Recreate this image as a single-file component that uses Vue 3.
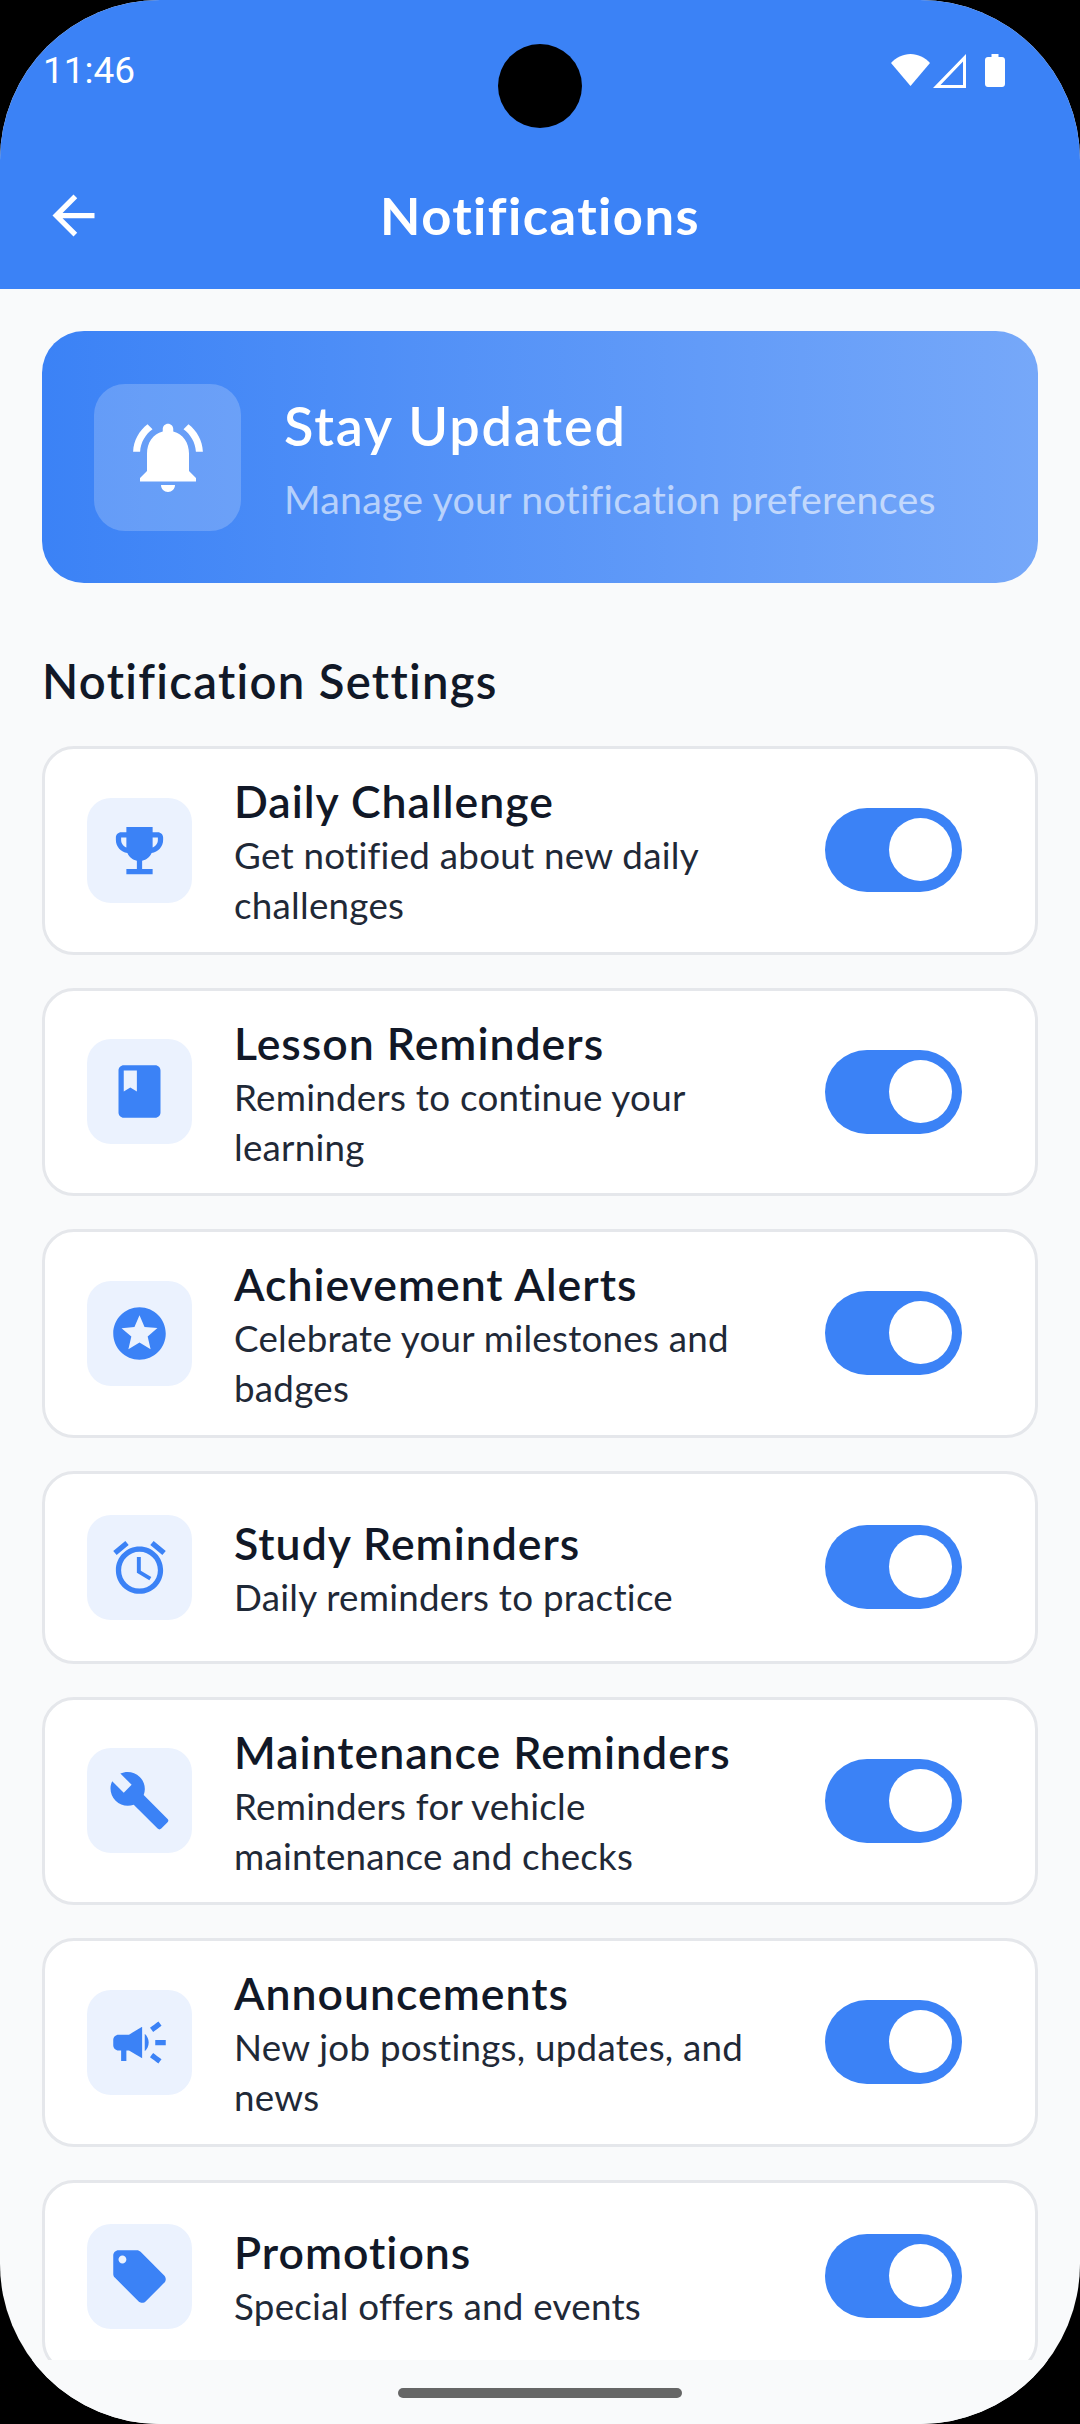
<script setup>
const items = [
  { t: 'Daily Challenge', s: 'Get notified about new daily challenges', i: 'trophy' },
  { t: 'Lesson Reminders', s: 'Reminders to continue your learning', i: 'book' },
  { t: 'Achievement Alerts', s: 'Celebrate your milestones and badges', i: 'star' },
  { t: 'Study Reminders', s: 'Daily reminders to practice', i: 'alarm' },
  { t: 'Maintenance Reminders', s: 'Reminders for vehicle maintenance and checks', i: 'wrench' },
  { t: 'Announcements', s: 'New job postings, updates, and news', i: 'campaign' },
  { t: 'Promotions', s: 'Special offers and events', i: 'tag' },
]
const paths = {
  trophy: 'M19 5h-2V3H7v2H5c-1.1 0-2 .9-2 2v1c0 2.55 1.92 4.63 4.39 4.94.63 1.5 1.98 2.63 3.61 2.96V19H7v2h10v-2h-4v-3.1c1.63-.33 2.98-1.46 3.61-2.96C19.08 12.63 21 10.55 21 8V7c0-1.1-.9-2-2-2zM5 8V7h2v3.82C5.84 10.4 5 9.3 5 8zm14 0c0 1.3-.84 2.4-2 2.82V7h2v1z',
  book: 'M18 2H6c-1.1 0-2 .9-2 2v16c0 1.1.9 2 2 2h12c1.1 0 2-.9 2-2V4c0-1.1-.9-2-2-2zM6 4h5v8l-2.5-1.5L6 12V4z',
  star: 'M11.99 2C6.47 2 2 6.48 2 12s4.47 10 9.99 10C17.52 22 22 17.52 22 12S17.52 2 11.99 2zm4.24 16L12 15.45 7.77 18l1.12-4.81-3.73-3.23 4.92-.42L12 5l1.92 4.53 4.92.42-3.73 3.23L16.23 18z',
  alarm: 'M22 5.72l-4.6-3.86-1.29 1.53 4.6 3.86L22 5.72zM7.88 3.39L6.6 1.86 2 5.71l1.29 1.53 4.59-3.85zM12.5 8H11v6l4.75 2.85.75-1.23-4-2.37V8zM12 4c-4.97 0-9 4.03-9 9s4.03 9 9 9 9-4.03 9-9-4.03-9-9-9zm0 16c-3.87 0-7-3.13-7-7s3.13-7 7-7 7 3.13 7 7-3.13 7-7 7z',
  wrench: 'M22.7 19l-9.1-9.1c.9-2.3.4-5-1.5-6.9-2-2-5-2.4-7.4-1.3L9 6 6 9 1.6 4.7C.4 7.1.9 10.1 2.9 12.1c1.9 1.9 4.6 2.4 6.9 1.5l9.1 9.1c.4.4 1 .4 1.4 0l2.3-2.3c.5-.4.5-1.1.1-1.4z',
  campaign: 'M18 11v2h4v-2h-4zm-2 6.61c.96.71 2.21 1.65 3.2 2.39.4-.53.8-1.07 1.2-1.6-.99-.74-2.24-1.68-3.2-2.4-.4.54-.8 1.08-1.2 1.61zM20.4 5.6c-.4-.53-.8-1.07-1.2-1.6-.99.74-2.24 1.68-3.2 2.4.4.53.8 1.07 1.2 1.6.96-.72 2.21-1.65 3.2-2.4zM4 9c-1.1 0-2 .9-2 2v2c0 1.1.9 2 2 2h1v4h2v-4h1l5 3V6L8 9H4zm11.5 3c0-1.33-.58-2.53-1.5-3.35v6.69c.92-.81 1.5-2.01 1.5-3.34z',
  tag: 'M21.41 11.58l-9-9C12.05 2.22 11.55 2 11 2H4c-1.1 0-2 .9-2 2v7c0 .55.22 1.05.59 1.42l9 9c.36.36.86.58 1.41.58.55 0 1.05-.22 1.41-.59l7-7c.37-.36.59-.86.59-1.41 0-.55-.23-1.06-.59-1.42zM5.5 7C4.67 7 4 6.33 4 5.5S4.67 4 5.5 4 7 4.67 7 5.5 6.33 7 5.5 7z',
}
</script>

<template>
  <div class="screen">
    <header class="header">
      <div class="status">
        <span class="time">11:46</span>
        <div class="status-icons">
          <svg class="wifi" viewBox="0 0 39 32"><path d="M19.500 32 0 9C5 3.500 12 0 19.500 0S34 3.500 39 9z" /></svg>
          <svg class="signal" viewBox="0 0 33 34"><path fill-rule="evenodd" d="M33 0v34H0zM30 7.500 7.500 31H30z" /></svg>
          <svg class="battery" viewBox="0 0 20 33"><path d="M6.500 0h7v3H17c1.700 0 3 1.300 3 3v24c0 1.700-1.300 3-3 3H3c-1.700 0-3-1.300-3-3V6c0-1.700 1.300-3 3-3h3.500z" /></svg>
        </div>
      </div>
      <div class="appbar">
        <svg class="back" viewBox="0 0 24 24"><path d="M20 11H7.830l5.590-5.590L12 4l-8 8 8 8 1.410-1.410L7.830 13H20z" /></svg>
        <h1 class="title">Notifications</h1>
      </div>
    </header>
    <div class="camera"></div>

    <main class="content">
      <section class="banner">
        <div class="banner-icon">
          <svg viewBox="0 0 24 24"><path d="M12 22c1.100 0 2-.9 2-2h-4c0 1.100.9 2 2 2zm6-6v-5c0-3.070-1.640-5.640-4.500-6.320V4c0-.83-.67-1.500-1.500-1.500s-1.500.67-1.500 1.500v.68C7.630 5.360 6 7.920 6 11v5l-2 2v1h16v-1l-2-2zM7.580 4.080 6.150 2.650C3.750 4.480 2.170 7.300 2.030 10.500h2C4.180 7.850 5.540 5.530 7.580 4.080zM19.970 10.500h2c-.15-3.200-1.730-6.020-4.120-7.850l-1.420 1.430c2.020 1.450 3.390 3.770 3.540 6.420z" /></svg>
        </div>
        <div class="banner-text">
          <div class="banner-title">Stay Updated</div>
          <div class="banner-sub">Manage your notification preferences</div>
        </div>
      </section>

      <h2 class="section">Notification Settings</h2>

      <div class="list">
        <article v-for="it in items" :key="it.t" class="card">
          <div class="card-icon">
            <svg viewBox="0 0 24 24"><path :d="paths[it.i]" /></svg>
          </div>
          <div class="card-text">
            <div class="card-title">{{ it.t }}</div>
            <div class="card-sub">{{ it.s }}</div>
          </div>
          <div class="toggle"><span class="thumb"></span></div>
        </article>
      </div>
    </main>

    <footer class="navbar"><span class="home"></span></footer>
  </div>
</template>

<style>
html, body { margin: 0; background: #000; }
</style>

<style scoped>
.screen {
  position: relative;
  width: 1080px;
  height: 2424px;
  overflow: hidden;
  border-radius: 160px;
  background: #F9FAFB;
  display: flex;
  flex-direction: column;
  font-family: "Lato", "Open Sans", sans-serif;
  color: #111827;
}
.header {
  flex: none;
  height: 289px;
  background: #3B82F6;
  color: #fff;
}
.status {
  height: 142px;
  padding: 0 75px 0 43px;
  display: flex;
  justify-content: space-between;
  align-items: flex-start;
}
.time {
  font-family: Roboto, sans-serif;
  font-size: 37px;
  line-height: 44px;
  margin-top: 49px;
}
.status-icons { display: flex; align-items: flex-start; margin-top: 54px; }
.status-icons svg { fill: #fff; display: block; }
.wifi { width: 39px; height: 32px; }
.signal { width: 33px; height: 34px; margin-left: 3px; }
.battery { width: 20px; height: 33px; margin-left: 19px; }
.appbar {
  position: relative;
  height: 147px;
  display: flex;
  align-items: center;
  justify-content: center;
  padding-bottom: 2px;
  box-sizing: border-box;
}
.back { position: absolute; left: 42px; top: 42px; width: 63px; height: 63px; fill: #fff; }
.title { margin: 0; font-size: 52.5px; font-weight: 700; line-height: 60px; letter-spacing: 1.4px; }
.camera {
  position: absolute;
  left: 498px;
  top: 44px;
  width: 84px;
  height: 84px;
  border-radius: 50%;
  background: #000;
}
.content {
  flex: none;
  height: 2071px;
  box-sizing: border-box;
  overflow: hidden;
  padding: 42px 42px 0;
}
.banner {
  height: 252px;
  box-sizing: border-box;
  border-radius: 42px;
  padding: 0 52px;
  display: flex;
  align-items: center;
  gap: 43px;
  background: linear-gradient(90deg, #3B82F6, #76A8F9);
}
.banner-icon {
  flex: none;
  width: 147px;
  height: 147px;
  border-radius: 31px;
  background: rgba(255, 255, 255, .2);
  display: flex;
  align-items: center;
  justify-content: center;
}
.banner-icon svg { width: 84px; height: 84px; fill: #fff; }
.banner-text { padding-top: 3px; }
.banner-title { color: #fff; font-size: 54px; font-weight: 600; line-height: 64px; letter-spacing: 1.9px; }
.banner-sub { color: rgba(255, 255, 255, .6); font-size: 39.4px; line-height: 48px; margin-top: 17px; letter-spacing: .2px; }
.section { margin: 68px 0 0; font-size: 47.25px; font-weight: 600; line-height: 60px; letter-spacing: 1.3px; color: #111827; }
.list { display: flex; flex-direction: column; gap: 33px; margin-top: 35px; }
.card {
  flex: none;
  min-height: 193px;
  box-sizing: border-box;
  background: #fff;
  border: 3px solid #E5E7EB;
  border-radius: 32px;
  padding: 21.25px 73px 21.25px 42px;
  display: flex;
  align-items: center;
}
.card-icon {
  flex: none;
  width: 105px;
  height: 105px;
  border-radius: 24px;
  background: #EBF2FE;
  display: flex;
  align-items: center;
  justify-content: center;
}
.card-icon svg { width: 63px; height: 63px; fill: #3B82F6; }
.card-text { flex: 1; min-width: 0; margin-left: 42px; margin-right: 42px; padding-top: 2px; }
.card-title { font-size: 44.6px; font-weight: 600; line-height: 57px; letter-spacing: 1px; color: #111827; }
.card-sub { font-size: 36.75px; line-height: 50px; letter-spacing: .25px; color: #1F2937; margin-top: 1px; }
.toggle {
  flex: none;
  position: relative;
  width: 137px;
  height: 84px;
  border-radius: 42px;
  background: #3B82F6;
}
.thumb {
  position: absolute;
  right: 10px;
  top: 10px;
  width: 63px;
  height: 63px;
  border-radius: 50%;
  background: #fff;
}
.navbar {
  flex: none;
  position: absolute;
  left: 0;
  right: 0;
  bottom: 0;
  height: 64px;
  background: #F9FAFB;
  display: flex;
  justify-content: center;
}
.home {
  width: 284px;
  height: 10px;
  margin-top: 28px;
  border-radius: 5px;
  background: #666;
}
</style>
